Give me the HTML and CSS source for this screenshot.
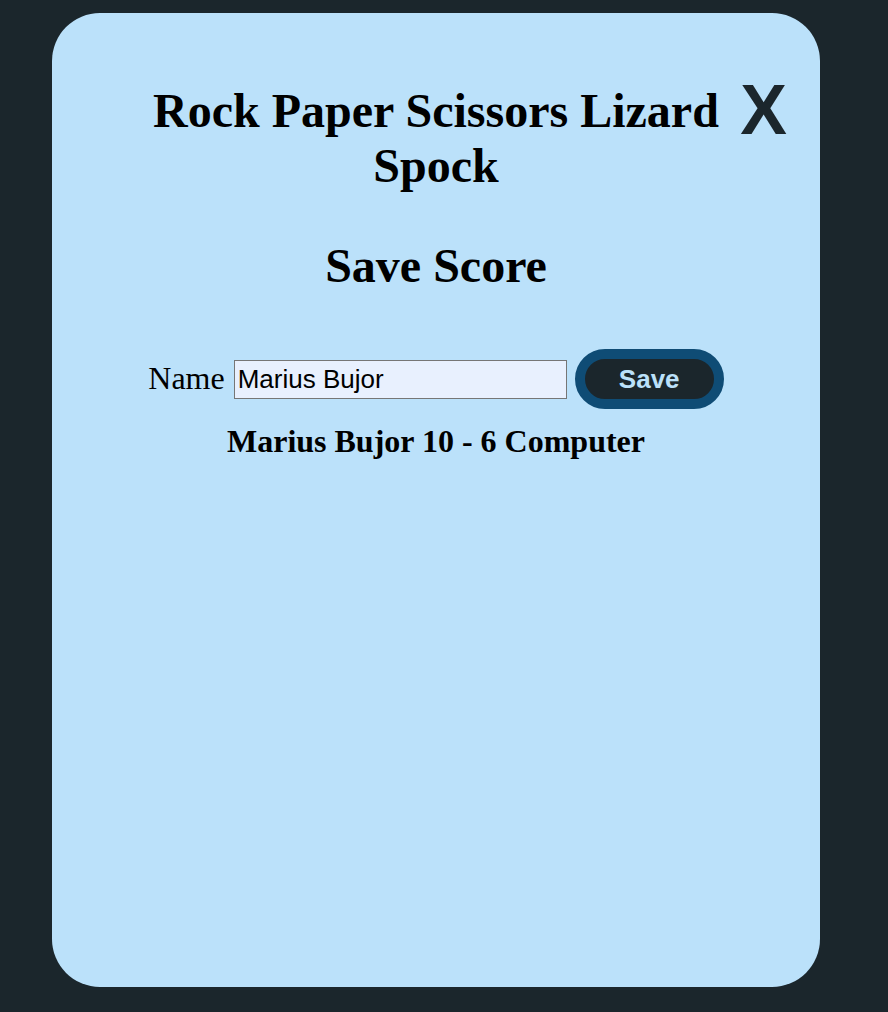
FILE: index.html
```html
<!DOCTYPE html>
<html lang="en">
<head>
<meta charset="utf-8">
<title>Rock Paper Scissors Lizard Spock - Save Score</title>
<link rel="stylesheet" href="styles.css">
</head>
<body>
  <div class="card">
    <button class="close" type="button">X</button>
    <h1 class="title">Rock Paper Scissors Lizard Spock</h1>
    <h2 class="subtitle">Save Score</h2>
    <form class="save-row">
      <label class="name-label" for="name">Name</label>
      <input class="name-input" id="name" type="text" value="Marius Bujor">
      <button class="save-btn" type="button">Save</button>
    </form>
    <p class="score">Marius Bujor 10 - 6 Computer</p>
  </div>
</body>
</html>
```

FILE: styles.css
```css
html, body {
  margin: 0;
  background: #1b262c;
}

body {
  padding: 13px 0 0 52px;
  height: 1012px;
  box-sizing: border-box;
  font-family: "Liberation Serif", "Times New Roman", serif;
  color: #000;
}

.card {
  position: relative;
  width: 768px;
  height: 974px;
  background: #bbe1fa;
  border-radius: 48px;
  display: flex;
  flex-direction: column;
  align-items: center;
}

.close {
  position: absolute;
  top: 62px;
  right: 33px;
  margin: 0;
  padding: 0;
  border: 0;
  background: none;
  font-family: "Liberation Sans", Arial, sans-serif;
  font-size: 70px;
  font-weight: bold;
  line-height: 70px;
  color: #1b262c;
  cursor: pointer;
}

.title {
  width: 600px;
  margin: 70px 0 0;
  font-size: 48px;
  line-height: 55px;
  font-weight: bold;
  text-align: center;
}

.subtitle {
  margin: 45px 0 0;
  font-size: 48px;
  line-height: 55px;
  font-weight: bold;
  text-align: center;
}

.save-row {
  margin: 56px 0 0;
  display: flex;
  align-items: center;
  gap: 8px;
  height: 60px;
}

.name-label {
  font-size: 32px;
  line-height: 37px;
  padding-bottom: 1px;
  margin-right: 1px;
}

.name-input {
  width: 333px;
  height: 39px;
  box-sizing: border-box;
  margin: 0;
  padding: 1px 3px;
  border: 1px solid #767676;
  border-radius: 0;
  background: #e8f0fe;
  font-family: "Liberation Sans", Arial, sans-serif;
  font-size: 26px;
  color: #000;
}

.save-btn {
  width: 149px;
  height: 60px;
  box-sizing: border-box;
  margin: 0;
  padding: 0;
  border: 10px solid #0f4c75;
  border-radius: 30px;
  background: #1b262c;
  color: #bbe1fa;
  font-family: "Liberation Sans", Arial, sans-serif;
  font-size: 26px;
  font-weight: bold;
  cursor: pointer;
}

.score {
  margin: 14px 0 0;
  font-size: 32px;
  line-height: 37px;
  font-weight: bold;
  text-align: center;
}
```
